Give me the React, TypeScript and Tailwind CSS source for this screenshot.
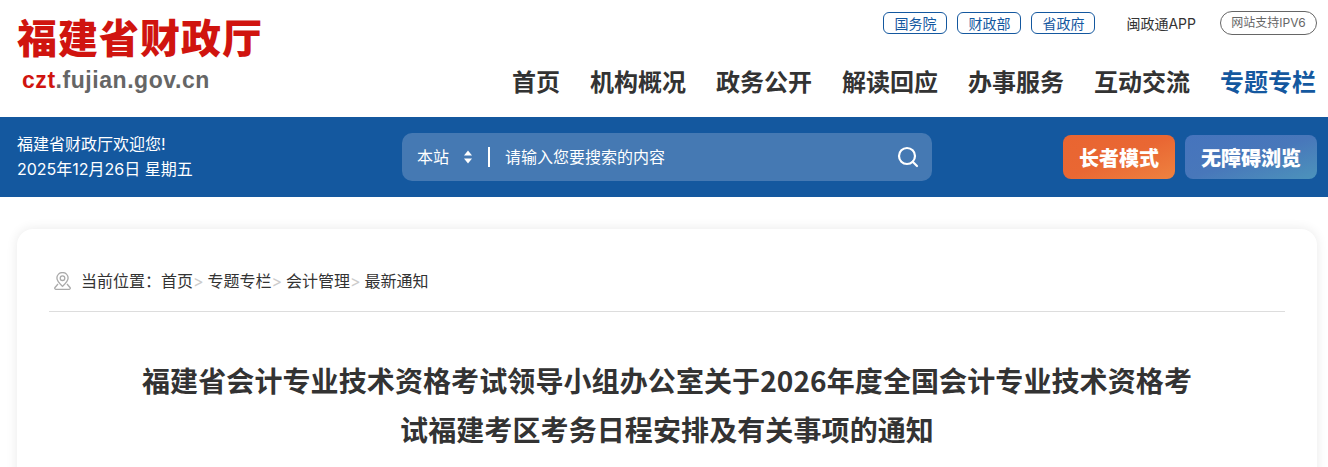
import { Search } from 'lucide-react';

const navItems = ['首页', '机构概况', '政务公开', '解读回应', '办事服务', '互动交流', '专题专栏'];
const topLinks = ['国务院', '财政部', '省政府'];
const crumbs = ['首页', '专题专栏', '会计管理', '最新通知'];

const cjk = "font-['Inter','Noto_Sans_CJK_SC',sans-serif]";

export default function App() {
  return (
    <div className={`h-[467px] overflow-hidden bg-white ${cjk}`}>
      {/* 顶部 */}
      <header className="flex h-[117px] justify-between pl-[17px] pr-[11px]">
        <div className="pt-[12px]">
          <div className="whitespace-nowrap font-['Noto_Sans_CJK_SC',serif] text-[40px] leading-[48px] font-black tracking-[1px] text-[#d0140f]">
            福建省财政厅
          </div>
          <div className="mt-[7px] pl-[5px] font-['Liberation_Sans',sans-serif] text-[23px] leading-[26px] font-bold tracking-[0.55px] text-[#666]">
            <span className="text-[#d0140f]">czt</span>.fujian.gov.cn
          </div>
        </div>
        <div className="flex flex-col items-end">
          <div className="mt-[12px] flex h-[22px] items-center text-[14px]">
            <div className="flex gap-[10px]">
              {topLinks.map((t) => (
                <span key={t} className="flex h-[22px] w-[64px] items-center justify-center rounded-[6px] border border-[#14589f] text-[#14589f]">
                  {t}
                </span>
              ))}
            </div>
            <span className="ml-[31px] text-[#333]">闽政通APP</span>
            <span className="ml-[24px] flex h-[24px] w-[97px] items-center justify-center rounded-full border border-[#666] text-[12px] text-[#666]">
              网站支持IPV6
            </span>
          </div>
          <nav className="mt-[31px] mr-[1px] flex gap-[30px] text-[24px] leading-[36px] font-bold text-[#333]">
            {navItems.map((n, i) => (
              <a key={n} className={i === 6 ? 'text-[#14589f]' : ''}>
                {n}
              </a>
            ))}
          </nav>
        </div>
      </header>

      {/* 蓝色搜索条 */}
      <div className="flex h-[80px] items-center bg-[#14589f] pl-[17px] pr-[11px] text-white">
        <div className="w-[385px] text-[16px] leading-[25px]">
          <div>福建省财政厅欢迎您!</div>
          <div>2025年12月26日 星期五</div>
        </div>
        <div className="flex h-[48px] w-[530px] items-center rounded-[10px] bg-[#4579b3] pl-[15px] pr-[12px] text-[16px]">
          <span>本站</span>
          <svg viewBox="0 0 10 14" className="ml-[14px] h-[14px] w-[10px] fill-white">
            <path d="M5 0.5 9 5.5H1Z" />
            <path d="M5 13.5 1 8.5H9Z" />
          </svg>
          <span className="ml-[15px] h-[20px] w-[2px] bg-white" />
          <span className="ml-[15px] flex-1">请输入您要搜索的内容</span>
          <Search className="h-[24px] w-[24px]" strokeWidth={2.2} />
        </div>
        <div className="ml-auto flex gap-[10px] text-[20px] font-black">
          <span className="flex h-[44px] w-[112px] items-center justify-center rounded-[8px] bg-gradient-to-br from-[#e96531] via-[#e96733] to-[#ee8240] pt-[3px]">
            长者模式
          </span>
          <span className="flex h-[44px] w-[132px] items-center justify-center rounded-[8px] bg-gradient-to-br from-[#4674bd] via-[#4877ba] to-[#4c93bb] pt-[3px]">
            无障碍浏览
          </span>
        </div>
      </div>

      {/* 正文卡片 */}
      <main className="mx-[17px] mr-[11px] mt-[32px] h-[400px] rounded-[16px] bg-white px-[32px] shadow-[0_0_12px_rgba(0,0,0,0.09)]">
        <div className="flex h-[83px] items-center border-b border-[#ddd] pt-[22px] pl-[5px] text-[16px] text-[#333]">
          <svg viewBox="2 1 16 18" className="h-[18px] w-[17px] fill-none stroke-[#aaa]" strokeWidth="1.3">
            <path d="M10 1.5a5.6 5.6 0 0 0-5.6 5.6c0 3.4 3.6 6.4 5.6 8.2 2-1.800 5.600-4.800 5.600-8.200A5.600 5.600 0 0 0 10 1.500Z" />
            <circle cx="10" cy="7.200" r="2.300" />
            <path d="M5.500 13 2.500 16.500c-.6.800 0 1.800 1 1.800h13c1 0 1.600-1 1-1.800L14.500 13" />
          </svg>
          <span className="ml-[10px]">当前位置：</span>
          {crumbs.map((c, i) => (
            <span key={c} className="flex items-center">
              <span>{c}</span>
              {i < crumbs.length - 1 && <span className="w-[14.5px] text-[#ccc]">&gt;</span>}
            </span>
          ))}
        </div>
        <h1 className="mx-auto mt-[44px] w-[1060px] text-center font-['Noto_Sans_CJK_SC',sans-serif] text-[28px] leading-[49px] font-bold tracking-[0.1px] text-[#333]">
          福建省会计专业技术资格考试领导小组办公室关于2026年度全国会计专业技术资格考试福建考区考务日程安排及有关事项的通知
        </h1>
      </main>
    </div>
  );
}
